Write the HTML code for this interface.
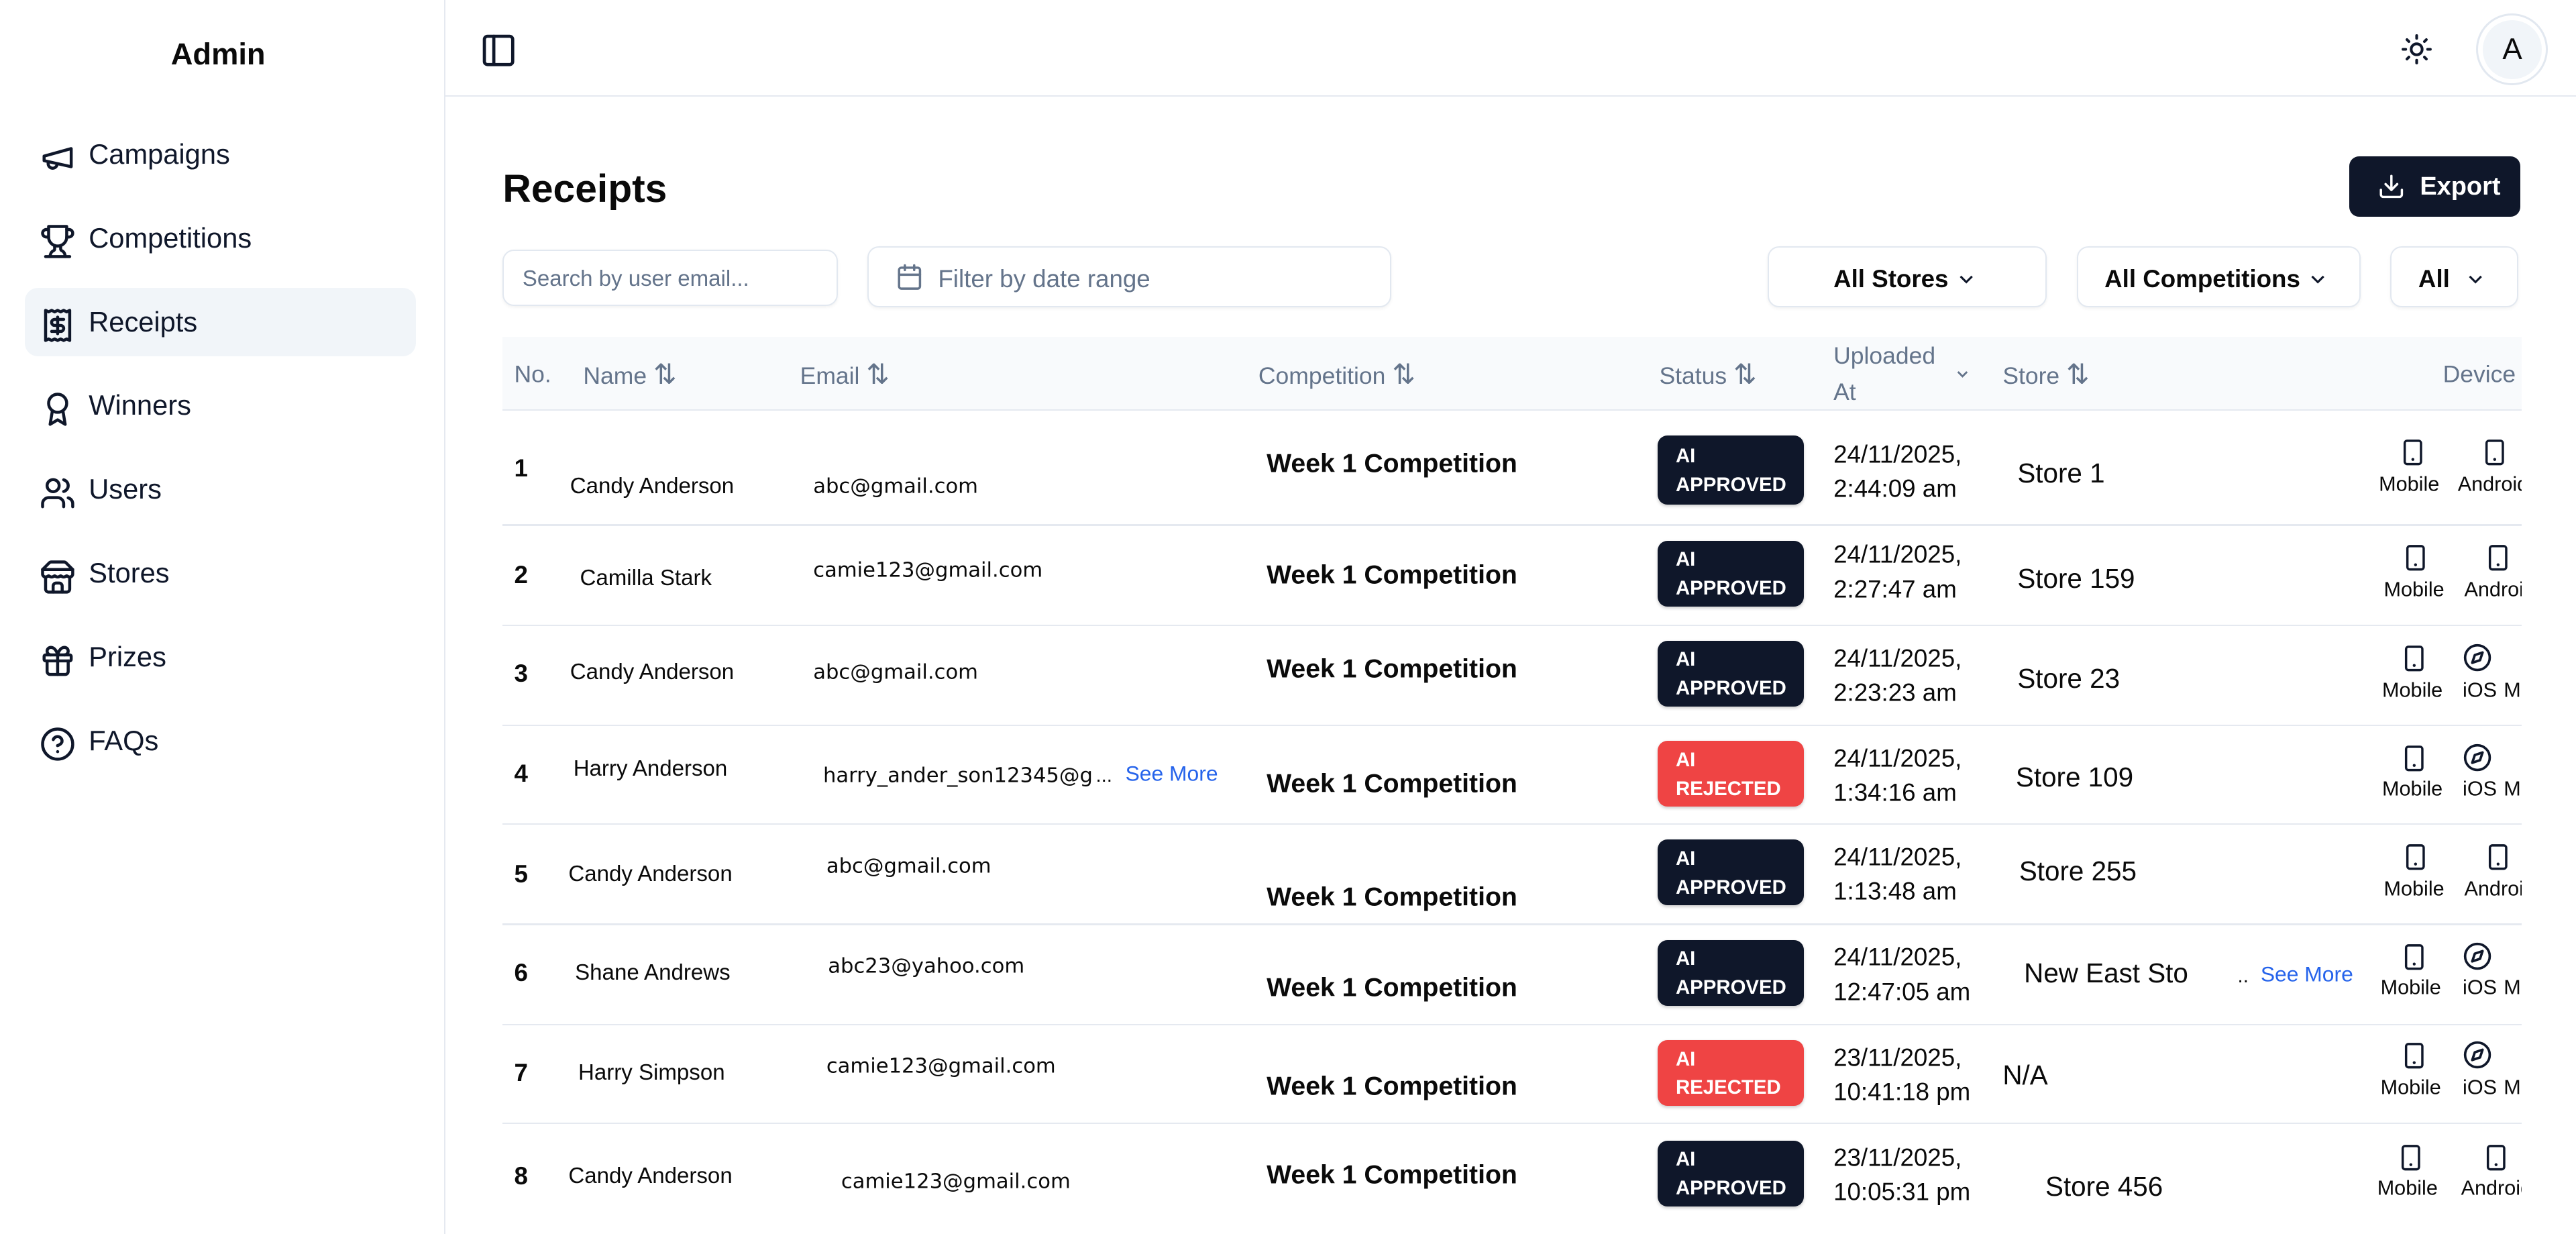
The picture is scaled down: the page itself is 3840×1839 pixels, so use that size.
<!DOCTYPE html>
<html><head><meta charset="utf-8"><style>
*{margin:0;padding:0;box-sizing:border-box}
html,body{width:3840px;height:1838px;overflow:hidden;background:#fff;font-family:"Liberation Sans",sans-serif;color:#0a0a0a}
#r{position:absolute;left:0;top:0;width:1568px;height:751px;zoom:2.449;overflow:hidden;background:#fff}
.a{position:absolute;white-space:nowrap;transform:translateY(-50%);line-height:1.15}
.sb{position:absolute;left:0;top:0;width:271px;height:751px;background:#fff;border-right:1px solid #e5e9f0}
.nav{position:absolute;left:24px;font-size:17px;color:#0f172a}
.nav svg{position:absolute;left:0;top:-10px}
.nav span{position:absolute;left:30px;top:-11px;white-space:nowrap}
.box{position:absolute;border:1px solid #e2e8f0;border-radius:7px;background:#fff;box-shadow:0 1px 2px rgba(0,0,0,.05)}
.hd{font-size:14.5px;color:#64748b;font-weight:500}
.badge{position:absolute;left:1009px;width:89px;border-radius:6px;color:#fff;font-size:12px;font-weight:700;padding:3px 0 0 11px;line-height:17.5px;box-shadow:0 1px 2px rgba(0,0,0,.2)}
.ap{background:#0f172a}.rj{background:#ef4444}
.line{position:absolute;left:306px;width:1229px;height:1px;background:#e5e9f0}
.nm{font-size:13.5px}
.em{font-family:"DejaVu Sans","Liberation Sans",sans-serif;font-size:12.5px}
.cp{font-size:16px;font-weight:700;left:771px}
.dt{font-size:15px;left:1116px;line-height:21px}
.st{font-size:16.5px}
.dl{font-size:12.5px}
.no{font-size:15px;font-weight:700;left:313px}
.blue{color:#2563eb;font-size:13px;font-weight:500}
</style></head><body><div id="r">
<div class="sb">
<div class="a" style="left:104px;top:33px;font-size:18.5px;font-weight:700">Admin</div>
<div style="position:absolute;left:15px;top:175px;width:238px;height:42px;background:#f1f5f9;border-radius:8px"></div>
<div class="nav" style="top:95px"><svg width="22" height="22" viewBox="0 0 24 24" fill="none" stroke="#0f172a" stroke-width="2" stroke-linecap="round" stroke-linejoin="round"><path d="m3 11 18-5v12L3 14v-3z"/><path d="M11.6 16.8a3 3 0 1 1-5.8-1.6"/></svg><span>Campaigns</span></div>
<div class="nav" style="top:146px"><svg width="22" height="22" viewBox="0 0 24 24" fill="none" stroke="#0f172a" stroke-width="2" stroke-linecap="round" stroke-linejoin="round"><path d="M6 9H4.5a2.5 2.5 0 0 1 0-5H6"/><path d="M18 9h1.5a2.5 2.5 0 0 0 0-5H18"/><path d="M4 22h16"/><path d="M10 14.66V17c0 .55-.47.98-.97 1.21C7.85 18.75 7 20.24 7 22"/><path d="M14 14.66V17c0 .55.47.98.97 1.21C16.15 18.75 17 20.24 17 22"/><path d="M18 2H6v7a6 6 0 0 0 12 0V2Z"/></svg><span>Competitions</span></div>
<div class="nav" style="top:197px"><svg width="22" height="22" viewBox="0 0 24 24" fill="none" stroke="#0f172a" stroke-width="2" stroke-linecap="round" stroke-linejoin="round"><path d="M4 2v20l2-1 2 1 2-1 2 1 2-1 2 1 2-1 2 1V2l-2 1-2-1-2 1-2-1-2 1-2-1-2 1Z"/><path d="M16 8h-6a2 2 0 1 0 0 4h4a2 2 0 1 1 0 4H8"/><path d="M12 17.5v-11"/></svg><span>Receipts</span></div>
<div class="nav" style="top:248px"><svg width="22" height="22" viewBox="0 0 24 24" fill="none" stroke="#0f172a" stroke-width="2" stroke-linecap="round" stroke-linejoin="round"><circle cx="12" cy="8" r="6"/><path d="M15.477 12.89 17 22l-5-3-5 3 1.523-9.11"/></svg><span>Winners</span></div>
<div class="nav" style="top:299px"><svg width="22" height="22" viewBox="0 0 24 24" fill="none" stroke="#0f172a" stroke-width="2" stroke-linecap="round" stroke-linejoin="round"><path d="M16 21v-2a4 4 0 0 0-4-4H6a4 4 0 0 0-4 4v2"/><circle cx="9" cy="7" r="4"/><path d="M22 21v-2a4 4 0 0 0-3-3.87"/><path d="M16 3.13a4 4 0 0 1 0 7.75"/></svg><span>Users</span></div>
<div class="nav" style="top:350px"><svg width="22" height="22" viewBox="0 0 24 24" fill="none" stroke="#0f172a" stroke-width="2" stroke-linecap="round" stroke-linejoin="round"><path d="m2 7 4.41-4.41A2 2 0 0 1 7.830 2h8.34a2 2 0 0 1 1.42.59L22 7"/><path d="M4 12v8a2 2 0 0 0 2 2h12a2 2 0 0 0 2-2v-8"/><path d="M15 22v-4a2 2 0 0 0-2-2h-2a2 2 0 0 0-2 2v4"/><path d="M2 7h20"/><path d="M22 7v3a2 2 0 0 1-2 2a2.7 2.7 0 0 1-1.59-.63.7.7 0 0 0-.82 0A2.7 2.7 0 0 1 16 12a2.7 2.7 0 0 1-1.59-.63.7.7 0 0 0-.82 0A2.7 2.7 0 0 1 12 12a2.7 2.7 0 0 1-1.59-.63.7.7 0 0 0-.82 0A2.7 2.7 0 0 1 8 12a2.7 2.7 0 0 1-1.59-.63.7.7 0 0 0-.82 0A2.7 2.7 0 0 1 4 12a2 2 0 0 1-2-2V7"/></svg><span>Stores</span></div>
<div class="nav" style="top:401px"><svg width="22" height="22" viewBox="0 0 24 24" fill="none" stroke="#0f172a" stroke-width="2" stroke-linecap="round" stroke-linejoin="round"><rect x="3" y="8" width="18" height="4" rx="1"/><path d="M12 8v13"/><path d="M19 12v7a2 2 0 0 1-2 2H7a2 2 0 0 1-2-2v-7"/><path d="M7.5 8a2.5 2.5 0 0 1 0-5A4.8 8 0 0 1 12 8a4.8 8 0 0 1 4.5-5 2.5 2.5 0 0 1 0 5"/></svg><span>Prizes</span></div>
<div class="nav" style="top:452px"><svg width="22" height="22" viewBox="0 0 24 24" fill="none" stroke="#0f172a" stroke-width="2" stroke-linecap="round" stroke-linejoin="round"><circle cx="12" cy="12" r="10"/><path d="M9.09 9a3 3 0 0 1 5.83 1c0 2-3 3-3 3"/><path d="M12 17h.01"/></svg><span>FAQs</span></div>
</div>
<div style="position:absolute;left:271px;top:0;width:1297px;height:59px;background:#fff;border-bottom:1px solid #e5e9f0"></div>
<svg style="position:absolute;left:292px;top:19px" width="23" height="23" viewBox="0 0 24 24" fill="none" stroke="#0f172a" stroke-width="2" stroke-linecap="round" stroke-linejoin="round"><rect x="3" y="3" width="18" height="18" rx="2"/><path d="M9 3v18"/></svg>
<svg style="position:absolute;left:1461px;top:20px" width="20" height="20" viewBox="0 0 24 24" fill="none" stroke="#0f172a" stroke-width="2" stroke-linecap="round"><circle cx="12" cy="12" r="4"/><path d="M12 2v2M12 20v2M4.93 4.93l1.41 1.41M17.66 17.66l1.41 1.41M2 12h2M20 12h2M6.34 17.66l-1.41 1.41M19.07 4.93l-1.41 1.41"/></svg>
<div style="position:absolute;left:1507px;top:8px;width:44px;height:44px;border-radius:50%;border:1.5px solid #e2e8f0;background:#fff"><div style="position:absolute;left:3px;top:3px;width:36px;height:36px;border-radius:50%;background:#f1f5f9;text-align:center;line-height:36px;font-size:18px">A</div></div>

<div class="a" style="left:306px;top:115px;font-size:24px;font-weight:700">Receipts</div>
<div style="position:absolute;left:1430px;top:95px;width:104px;height:37px;background:#0f172a;border-radius:6px;color:#fff;font-size:15.5px;font-weight:700;line-height:37px;padding-left:43px">Export</div>
<svg style="position:absolute;left:1447px;top:105px" width="17" height="17" viewBox="0 0 24 24" fill="none" stroke="#fff" stroke-width="2" stroke-linecap="round" stroke-linejoin="round"><path d="M21 15v4a2 2 0 0 1-2 2H5a2 2 0 0 1-2-2v-4"/><path d="m7 10 5 5 5-5"/><path d="M12 15V3"/></svg>

<div class="box" style="left:306px;top:152px;width:204px;height:34px"></div>
<div class="a" style="left:318px;top:170px;font-size:13.5px;color:#64748b">Search by user email...</div>
<div class="box" style="left:528px;top:150px;width:319px;height:37px"></div>
<svg style="position:absolute;left:545px;top:160px" width="17" height="17" viewBox="0 0 24 24" fill="none" stroke="#64748b" stroke-width="2" stroke-linecap="round"><rect x="3" y="4" width="18" height="18" rx="2"/><path d="M16 2v4M8 2v4M3 10h18"/></svg>
<div class="a" style="left:571px;top:170px;font-size:15px;color:#64748b">Filter by date range</div>
<div class="box" style="left:1076px;top:150px;width:170px;height:37px"></div>
<div class="a" style="left:1116px;top:170px;font-size:15px;font-weight:700">All Stores</div>
<div class="box" style="left:1264px;top:150px;width:173px;height:37px"></div>
<div class="a" style="left:1281px;top:170px;font-size:15px;font-weight:700">All Competitions</div>
<div class="box" style="left:1455px;top:150px;width:78px;height:37px"></div>
<div class="a" style="left:1472px;top:170px;font-size:15px;font-weight:700">All</div>
<svg style="position:absolute;left:1190px;top:163px" width="14" height="14" viewBox="0 0 24 24" fill="none" stroke="#0f172a" stroke-width="2.2"><path d="m6 9 6 6 6-6"/></svg>
<svg style="position:absolute;left:1404px;top:163px" width="14" height="14" viewBox="0 0 24 24" fill="none" stroke="#0f172a" stroke-width="2.2"><path d="m6 9 6 6 6-6"/></svg>
<svg style="position:absolute;left:1500px;top:163px" width="14" height="14" viewBox="0 0 24 24" fill="none" stroke="#0f172a" stroke-width="2.2"><path d="m6 9 6 6 6-6"/></svg>

<div style="position:absolute;left:306px;top:205px;width:1229px;height:45px;background:#f8fafc;border-bottom:1px solid #e5e9f0"></div>
<div class="a hd" style="left:313px;top:228px">No.</div>
<div class="a hd" style="left:355px;top:228px">Name <span style="font-size:17px">⇅</span></div>
<div class="a hd" style="left:487px;top:228px">Email <span style="font-size:17px">⇅</span></div>
<div class="a hd" style="left:766px;top:228px">Competition <span style="font-size:17px">⇅</span></div>
<div class="a hd" style="left:1010px;top:228px">Status <span style="font-size:17px">⇅</span></div>
<div class="a hd" style="left:1116px;top:228px;line-height:22px">Uploaded<br>At</div>
<svg style="position:absolute;left:1189px;top:222px" width="11" height="11" viewBox="0 0 24 24" fill="none" stroke="#64748b" stroke-width="2.5"><path d="m6 9 6 6 6-6"/></svg>
<div class="a hd" style="left:1219px;top:228px">Store <span style="font-size:17px">⇅</span></div>
<div class="a hd" style="left:1487px;top:228px">Device</div>

<div class="line" style="top:319px"></div><div class="line" style="top:380px"></div><div class="line" style="top:441px"></div><div class="line" style="top:501px"></div><div class="line" style="top:562px"></div><div class="line" style="top:623px"></div><div class="line" style="top:683px"></div>

<div class="a no" style="top:285px">1</div>
<div class="a nm" style="left:347px;top:296px">Candy Anderson</div>
<div class="a em" style="left:495px;top:296px">abc@gmail.com</div>
<div class="a cp" style="top:282px">Week 1 Competition</div>
<div class="badge ap" style="top:265px;height:42px;padding-top:4px">AI<br>APPROVED</div>
<div class="a dt" style="top:287px">24/11/2025,<br>2:44:09 am</div>
<div class="a st" style="left:1228px;top:288px">Store 1</div>

<div class="a no" style="top:350px">2</div>
<div class="a nm" style="left:353px;top:352px">Camilla Stark</div>
<div class="a em" style="left:495px;top:347px">camie123@gmail.com</div>
<div class="a cp" style="top:350px">Week 1 Competition</div>
<div class="badge ap" style="top:329px;height:40px">AI<br>APPROVED</div>
<div class="a dt" style="top:348px">24/11/2025,<br>2:27:47 am</div>
<div class="a st" style="left:1228px;top:352px">Store 159</div>

<div class="a no" style="top:410px">3</div>
<div class="a nm" style="left:347px;top:409px">Candy Anderson</div>
<div class="a em" style="left:495px;top:409px">abc@gmail.com</div>
<div class="a cp" style="top:407px">Week 1 Competition</div>
<div class="badge ap" style="top:390px;height:40px">AI<br>APPROVED</div>
<div class="a dt" style="top:411px">24/11/2025,<br>2:23:23 am</div>
<div class="a st" style="left:1228px;top:413px">Store 23</div>

<div class="a no" style="top:471px">4</div>
<div class="a nm" style="left:349px;top:468px">Harry Anderson</div>
<div class="a em" style="left:501px;top:472px">harry_ander_son12345@g</div>
<div class="a" style="left:667px;top:472px;font-size:12px">...</div>
<div class="a blue" style="left:685px;top:471px">See More</div>
<div class="a cp" style="top:477px">Week 1 Competition</div>
<div class="badge rj" style="top:451px;height:40px">AI<br>REJECTED</div>
<div class="a dt" style="top:472px">24/11/2025,<br>1:34:16 am</div>
<div class="a st" style="left:1227px;top:473px">Store 109</div>

<div class="a no" style="top:532px">5</div>
<div class="a nm" style="left:346px;top:532px">Candy Anderson</div>
<div class="a em" style="left:503px;top:527px">abc@gmail.com</div>
<div class="a cp" style="top:546px">Week 1 Competition</div>
<div class="badge ap" style="top:511px;height:40px">AI<br>APPROVED</div>
<div class="a dt" style="top:532px">24/11/2025,<br>1:13:48 am</div>
<div class="a st" style="left:1229px;top:530px">Store 255</div>

<div class="a no" style="top:592px">6</div>
<div class="a nm" style="left:350px;top:592px">Shane Andrews</div>
<div class="a em" style="left:504px;top:588px">abc23@yahoo.com</div>
<div class="a cp" style="top:601px">Week 1 Competition</div>
<div class="badge ap" style="top:572px;height:40px">AI<br>APPROVED</div>
<div class="a dt" style="top:593px">24/11/2025,<br>12:47:05 am</div>
<div class="a st" style="left:1232px;top:592px">New East Sto</div>
<div class="a" style="left:1362px;top:594px;font-size:12px">..</div>
<div class="a blue" style="left:1376px;top:593px">See More</div>

<div class="a no" style="top:653px">7</div>
<div class="a nm" style="left:352px;top:653px">Harry Simpson</div>
<div class="a em" style="left:503px;top:649px">camie123@gmail.com</div>
<div class="a cp" style="top:661px">Week 1 Competition</div>
<div class="badge rj" style="top:633px;height:40px">AI<br>REJECTED</div>
<div class="a dt" style="top:654px">23/11/2025,<br>10:41:18 pm</div>
<div class="a st" style="left:1219px;top:654px">N/A</div>

<div class="a no" style="top:716px">8</div>
<div class="a nm" style="left:346px;top:716px">Candy Anderson</div>
<div class="a em" style="left:512px;top:719px">camie123@gmail.com</div>
<div class="a cp" style="top:715px">Week 1 Competition</div>
<div class="badge ap" style="top:694px;height:40px">AI<br>APPROVED</div>
<div class="a dt" style="top:715px">23/11/2025,<br>10:05:31 pm</div>
<div class="a st" style="left:1245px;top:722px">Store 456</div>

<div style="position:absolute;left:1440px;top:250px;width:95px;height:501px;overflow:hidden">
<svg width="0" height="0" style="position:absolute"><defs>
<symbol id="ph" viewBox="0 0 24 24"><rect x="5" y="2" width="14" height="20" rx="2" fill="none" stroke="#0f172a" stroke-width="2"/><path d="M12 18h.01" stroke="#0f172a" stroke-width="2.5" stroke-linecap="round"/></symbol>
<symbol id="cm" viewBox="0 0 24 24"><circle cx="12" cy="12" r="10" fill="none" stroke="#0f172a" stroke-width="2"/><path d="m16.2 7.8-2.1 6.3-6.3 2.1 2.1-6.3z" fill="none" stroke="#0f172a" stroke-width="2" stroke-linejoin="round"/></symbol></defs></svg>
<svg style="position:absolute;left:20px;top:16px" width="17" height="19"><use href="#ph"/></svg><div class="a dl" style="left:8px;top:45px">Mobile</div>
<svg style="position:absolute;left:70px;top:16px" width="17" height="19"><use href="#ph"/></svg><div class="a dl" style="left:56px;top:45px">Android</div>
<svg style="position:absolute;left:22px;top:80px" width="17" height="19"><use href="#ph"/></svg><div class="a dl" style="left:11px;top:109px">Mobile</div>
<svg style="position:absolute;left:72px;top:80px" width="17" height="19"><use href="#ph"/></svg><div class="a dl" style="left:60px;top:109px">Android</div>
<svg style="position:absolute;left:21px;top:141px" width="17" height="19"><use href="#ph"/></svg><div class="a dl" style="left:10px;top:170px">Mobile</div>
<svg style="position:absolute;left:59px;top:141px" width="18" height="18"><use href="#cm"/></svg><div class="a dl" style="left:59px;top:170px">iOS</div><div class="a dl" style="left:84px;top:170px">Mac</div>
<svg style="position:absolute;left:21px;top:202px" width="17" height="19"><use href="#ph"/></svg><div class="a dl" style="left:10px;top:230px">Mobile</div>
<svg style="position:absolute;left:59px;top:202px" width="18" height="18"><use href="#cm"/></svg><div class="a dl" style="left:59px;top:230px">iOS</div><div class="a dl" style="left:84px;top:230px">Mac</div>
<svg style="position:absolute;left:22px;top:262px" width="17" height="19"><use href="#ph"/></svg><div class="a dl" style="left:11px;top:291px">Mobile</div>
<svg style="position:absolute;left:72px;top:262px" width="17" height="19"><use href="#ph"/></svg><div class="a dl" style="left:60px;top:291px">Android</div>
<svg style="position:absolute;left:21px;top:323px" width="17" height="19"><use href="#ph"/></svg><div class="a dl" style="left:9px;top:351px">Mobile</div>
<svg style="position:absolute;left:59px;top:323px" width="18" height="18"><use href="#cm"/></svg><div class="a dl" style="left:59px;top:351px">iOS</div><div class="a dl" style="left:84px;top:351px">Mac</div>
<svg style="position:absolute;left:21px;top:383px" width="17" height="19"><use href="#ph"/></svg><div class="a dl" style="left:9px;top:412px">Mobile</div>
<svg style="position:absolute;left:59px;top:383px" width="18" height="18"><use href="#cm"/></svg><div class="a dl" style="left:59px;top:412px">iOS</div><div class="a dl" style="left:84px;top:412px">Mac</div>
<svg style="position:absolute;left:19px;top:445px" width="17" height="19"><use href="#ph"/></svg><div class="a dl" style="left:7px;top:473px">Mobile</div>
<svg style="position:absolute;left:71px;top:445px" width="17" height="19"><use href="#ph"/></svg><div class="a dl" style="left:58px;top:473px">Android</div>
</div>
</div></body></html>
